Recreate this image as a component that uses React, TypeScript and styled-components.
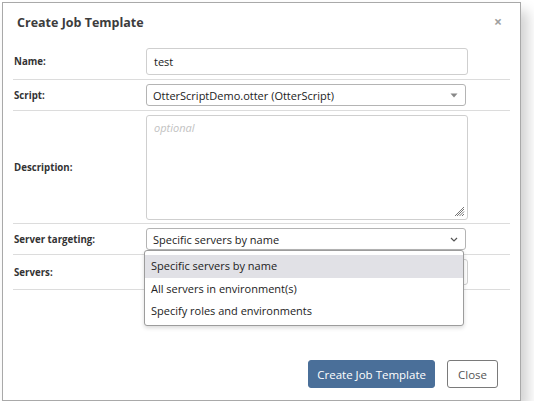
import React from 'react';
import styled, { createGlobalStyle } from 'styled-components';

const GlobalStyle = createGlobalStyle`
  body {
    margin: 0;
    background: #ffffff;
    font-family: "Open Sans", "Noto Sans", sans-serif;
  }
`;

const Dialog = styled.div`
  position: relative;
  box-sizing: border-box;
  margin: 2px 0 0 2px;
  width: 519px;
  height: 399px;
  border: 1px solid #a9a9a9;
  background: #fff;
  box-shadow: 7px 9px 12px rgba(0, 0, 0, 0.18);
  display: flex;
  flex-direction: column;
`;

const Header = styled.div`
  display: flex;
  align-items: center;
  justify-content: space-between;
  height: 38px;
  padding: 0 18px 0 14px;
`;

const Title = styled.h4`
  margin: 0;
  font-size: 12.5px;
  font-weight: 700;
  color: #3c3c3c;
`;

const CloseX = styled.span`
  font-size: 14px;
  font-weight: 700;
  color: #a0a0a0;
  line-height: 1;
`;

const Form = styled.div`
  margin-top: 3px;
  padding: 0 10px;
`;

const Row = styled.div<{ $bottom?: number }>`
  display: flex;
  align-items: center;
  padding: 4px 0 ${p => p.$bottom ?? 4}px;
  border-bottom: 1px solid #dcdcdc;
`;

const Label = styled.label`
  width: 132px;
  flex: none;
  padding-left: 1px;
  font-size: 9.7px;
  font-weight: 700;
  color: #333;
`;

const TextInput = styled.div<{ $h?: number }>`
  box-sizing: border-box;
  width: 322px;
  height: ${p => p.$h ?? 27}px;
  border: 1px solid #cfcfcf;
  border-radius: 3px;
  padding: 0 7px;
  display: flex;
  align-items: center;
  font-size: 11px;
  color: #222;
`;

const SelectBox = styled.div`
  box-sizing: border-box;
  width: 320px;
  height: 22px;
  border: 1px solid #b4b4b4;
  border-radius: 3px;
  padding: 0 7px 0 6px;
  display: flex;
  align-items: center;
  justify-content: space-between;
  font-size: 11px;
  color: #222;
`;

const TextArea = styled.div`
  position: relative;
  box-sizing: border-box;
  width: 322px;
  height: 105px;
  border: 1px solid #cfcfcf;
  border-radius: 3px;
  padding: 4px 7px;
  font-size: 11px;
`;

const Placeholder = styled.span`
  font-style: italic;
  color: #c2c2c2;
`;

const Grip = styled.svg`
  position: absolute;
  right: 2px;
  bottom: 2px;
`;

const Dropdown = styled.ul`
  position: absolute;
  left: 141px;
  top: 247px;
  box-sizing: border-box;
  width: 320px;
  height: 76px;
  margin: 0;
  padding: 4px 0 1px;
  list-style: none;
  border: 1px solid #9c9c9c;
  border-radius: 3px;
  background: #fff;
  box-shadow: 0 2px 4px rgba(0, 0, 0, 0.15);
  font-size: 11px;
  color: #222;
`;

const Option = styled.li<{ $active?: boolean }>`
  height: 22.5px;
  line-height: 22.5px;
  padding-left: 6px;
  background: ${p => (p.$active ? '#e1e1e6' : 'transparent')};
`;

const Footer = styled.div`
  margin-top: auto;
  display: flex;
  justify-content: flex-end;
  gap: 12px;
  padding: 0 22px 12px 0;
`;

const Button = styled.button<{ $primary?: boolean }>`
  box-sizing: border-box;
  height: 28px;
  padding: 0 ${p => (p.$primary ? 8 : 10)}px;
  border-radius: 3px;
  border: 1px solid ${p => (p.$primary ? '#4a6f99' : '#7a7a7a')};
  background: ${p => (p.$primary ? '#4a6f99' : '#fff')};
  color: ${p => (p.$primary ? '#fff' : '#555')};
  font-family: inherit;
  font-size: 11.5px;
`;

const Triangle = () => (
  <svg width="8" height="5" viewBox="0 0 8 5">
    <path d="M0.5 0.5 L7.5 0.5 L4 4.5 Z" fill="#888" />
  </svg>
);

const Chevron = () => (
  <svg width="8" height="5" viewBox="0 0 8 5">
    <path d="M1 1 L4 4 L7 1" stroke="#555" strokeWidth="1.2" fill="none" />
  </svg>
);

function App() {
  return (
    <>
      <GlobalStyle />
      <Dialog>
        <Header>
          <Title>Create Job Template</Title>
          <CloseX>×</CloseX>
        </Header>
        <Form>
          <Row>
            <Label>Name:</Label>
            <TextInput>test</TextInput>
          </Row>
          <Row>
            <Label>Script:</Label>
            <SelectBox>
              <span>OtterScriptDemo.otter (OtterScript)</span>
              <Triangle />
            </SelectBox>
          </Row>
          <Row $bottom={3}>
            <Label>Description:</Label>
            <TextArea>
              <Placeholder>optional</Placeholder>
              <Grip width="10" height="10" viewBox="0 0 10 10">
                <path d="M9 2 L2 9 M9 4.5 L4.5 9 M9 7 L7 9 M9 0 L0 9" stroke="#777" strokeWidth="1" />
              </Grip>
            </TextArea>
          </Row>
          <Row>
            <Label>Server targeting:</Label>
            <SelectBox>
              <span>Specific servers by name</span>
              <Chevron />
            </SelectBox>
          </Row>
          <Row>
            <Label>Servers:</Label>
            <TextInput $h={26} />
          </Row>
        </Form>
        <Dropdown>
          <Option $active>Specific servers by name</Option>
          <Option>All servers in environment(s)</Option>
          <Option>Specify roles and environments</Option>
        </Dropdown>
        <Footer>
          <Button $primary>Create Job Template</Button>
          <Button>Close</Button>
        </Footer>
      </Dialog>
    </>
  );
}

export default App;
